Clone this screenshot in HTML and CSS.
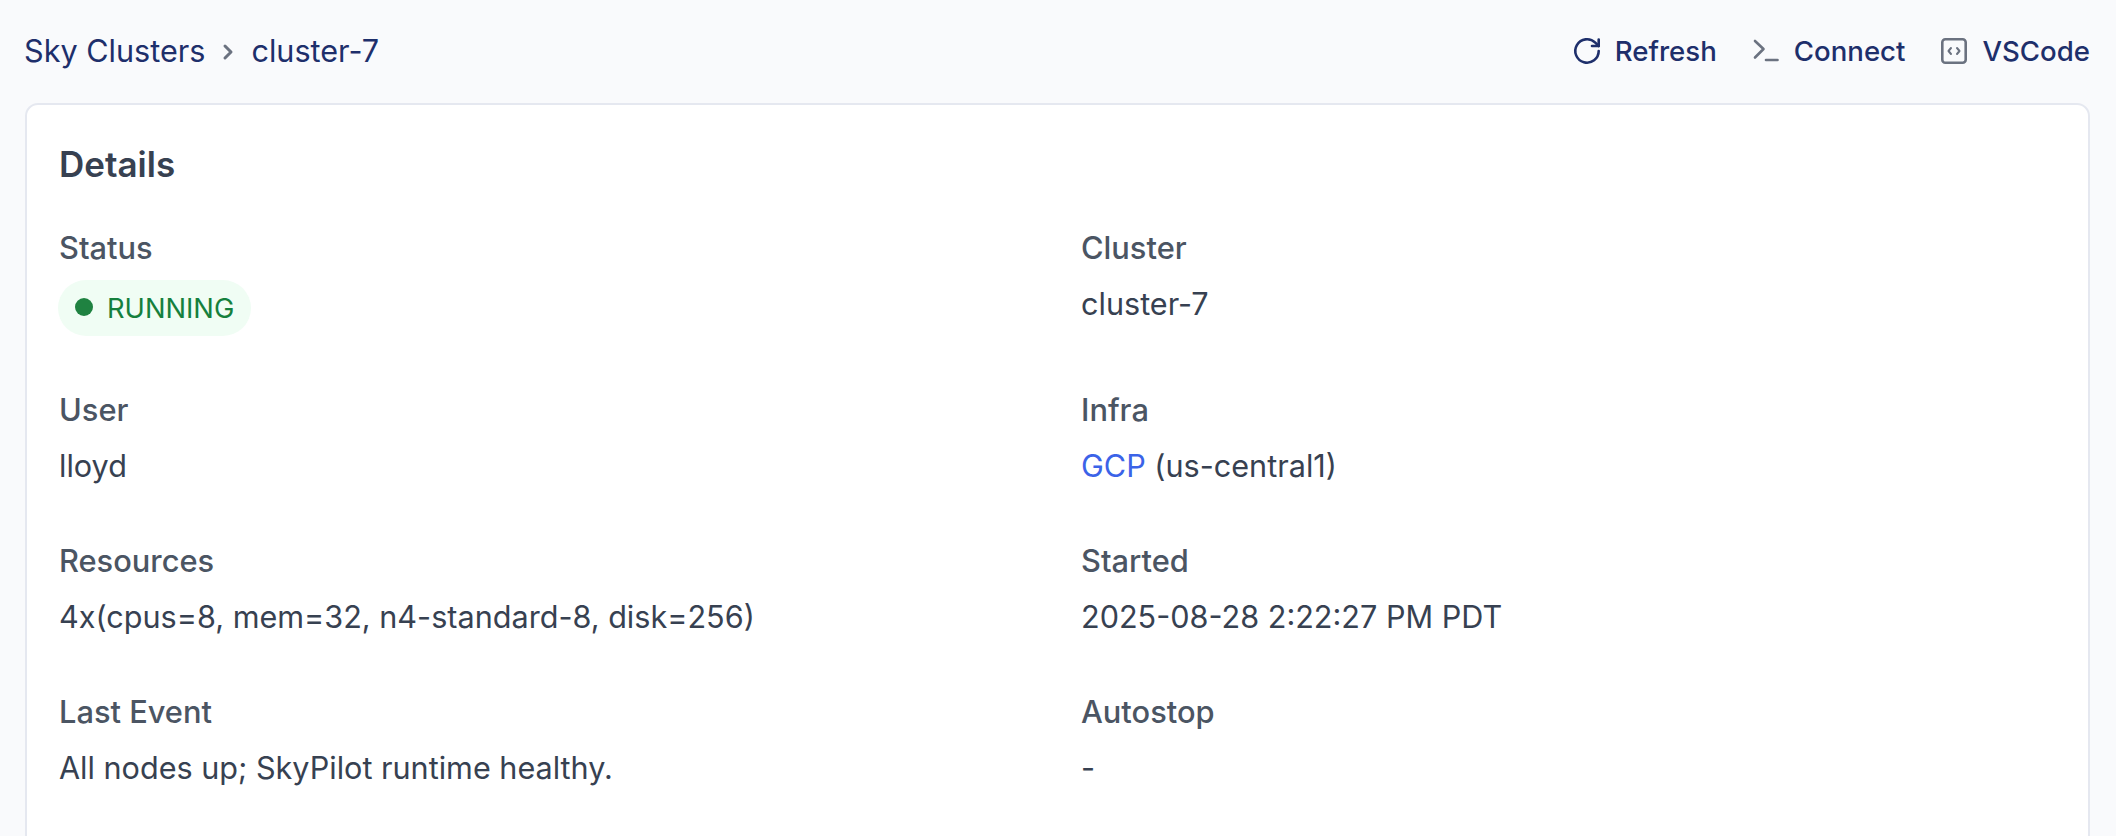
FILE: index.html
```html
<!DOCTYPE html>
<html lang="en">
<head>
<meta charset="utf-8">
<title>cluster-7</title>
<link rel="stylesheet" href="styles.css">
</head>
<body>
<header class="topbar">
  <nav class="crumbs">
    <a class="crumb">Sky Clusters</a>
    <svg class="chevron" viewBox="0 0 24 24"><path d="M9 6l6 6-6 6"/></svg>
    <a class="crumb">cluster-7</a>
  </nav>
  <div class="actions">
    <a class="action">
      <svg class="icon icon-navy" viewBox="0 0 26 26"><path d="M24.7 13A11.7 11.7 0 1 1 21.3 4.7L24.7 8"/><path d="M24.7 1.5V8H18"/></svg>
      <span>Refresh</span>
    </a>
    <a class="action">
      <svg class="icon icon-gray" viewBox="0 0 26 26"><path d="M2 3l8.5 8L2 19.5"/><path d="M13 22h11.5"/></svg>
      <span>Connect</span>
    </a>
    <a class="action">
      <svg class="icon icon-gray" viewBox="0 0 26 26"><rect x="1.3" y="1.3" width="23.4" height="23.4" rx="3"/><path class="thin" d="M10 10l-2.5 3 2.5 3M16 10l2.5 3-2.5 3"/></svg>
      <span>VSCode</span>
    </a>
  </div>
</header>
<main class="card">
  <h2 class="title">Details</h2>
  <div class="grid">
    <div class="field">
      <div class="label">Status</div>
      <div class="pill"><span class="dot"></span>RUNNING</div>
    </div>
    <div class="field">
      <div class="label">Cluster</div>
      <div class="value">cluster-7</div>
    </div>
    <div class="field">
      <div class="label">User</div>
      <div class="value">lloyd</div>
    </div>
    <div class="field">
      <div class="label">Infra</div>
      <div class="value"><a class="link">GCP</a> (us-central1)</div>
    </div>
    <div class="field">
      <div class="label">Resources</div>
      <div class="value">4x(cpus=8, mem=32, n4-standard-8, disk=256)</div>
    </div>
    <div class="field">
      <div class="label">Started</div>
      <div class="value">2025-08-28 2:22:27 PM PDT</div>
    </div>
    <div class="field">
      <div class="label">Last Event</div>
      <div class="value">All nodes up; SkyPilot runtime healthy.</div>
    </div>
    <div class="field">
      <div class="label">Autostop</div>
      <div class="value">-</div>
    </div>
  </div>
</main>
</body>
</html>
```
FILE: styles.css
```css
* { box-sizing: border-box; }
html, body { height: 100%; }
body {
  margin: 0;
  overflow: hidden;
  background: #f9fafc;
  font-family: "Inter", "Liberation Sans", sans-serif;
  color: #374151;
}
.topbar {
  display: flex;
  justify-content: space-between;
  align-items: center;
  height: 103px;
  padding: 0 26px 2px 24px;
}
.crumbs { display: flex; align-items: center; color: #1e2f6b; font-size: 30.6px; }
.chevron { width: 24px; height: 24px; margin: 3px 11px 0 11px; fill: none; stroke: #6b7280; stroke-width: 3; stroke-linecap: round; stroke-linejoin: round; }
.actions { display: flex; align-items: center; gap: 36px; }
.action { display: flex; align-items: center; gap: 15px; color: #1e2f6b; font-size: 27.6px; font-weight: 500; }
.icon { width: 26px; height: 26px; fill: none; stroke-width: 2.6; stroke-linecap: round; stroke-linejoin: round; overflow: visible; }
.icon-navy { stroke: #1e2f6b; }
.icon-gray { stroke: #6b7280; }
.thin { stroke-width: 2; }
.card {
  margin: 0 26px 0 25px;
  padding: 37px 32px 100px;
  background: #fff;
  border: 2px solid #e5e8f0;
  border-radius: 13px;
}
.title { margin: 0; font-size: 35px; line-height: 44px; font-weight: 600; color: #374151; }
.grid { display: grid; grid-template-columns: 1fr 1fr; column-gap: 47px; row-gap: 55px; margin-top: 43px; }
.label { font-size: 30.8px; line-height: 38px; font-weight: 500; color: #4b5563; }
.value { margin-top: 15px; margin-bottom: -1px; font-size: 30.6px; line-height: 44px; color: #374151; }
.pill {
  display: inline-flex;
  align-items: center;
  height: 56px;
  margin-top: 13px;
  margin-left: -1px;
  padding: 0 17px;
  border-radius: 28px;
  background: #f0fdf4;
  color: #15803d;
  font-size: 27.3px;
}
.dot { width: 18px; height: 18px; margin-right: 14px; margin-bottom: 3px; border-radius: 50%; background: #1f8241; }
.link { color: #3b63e8; }
```
